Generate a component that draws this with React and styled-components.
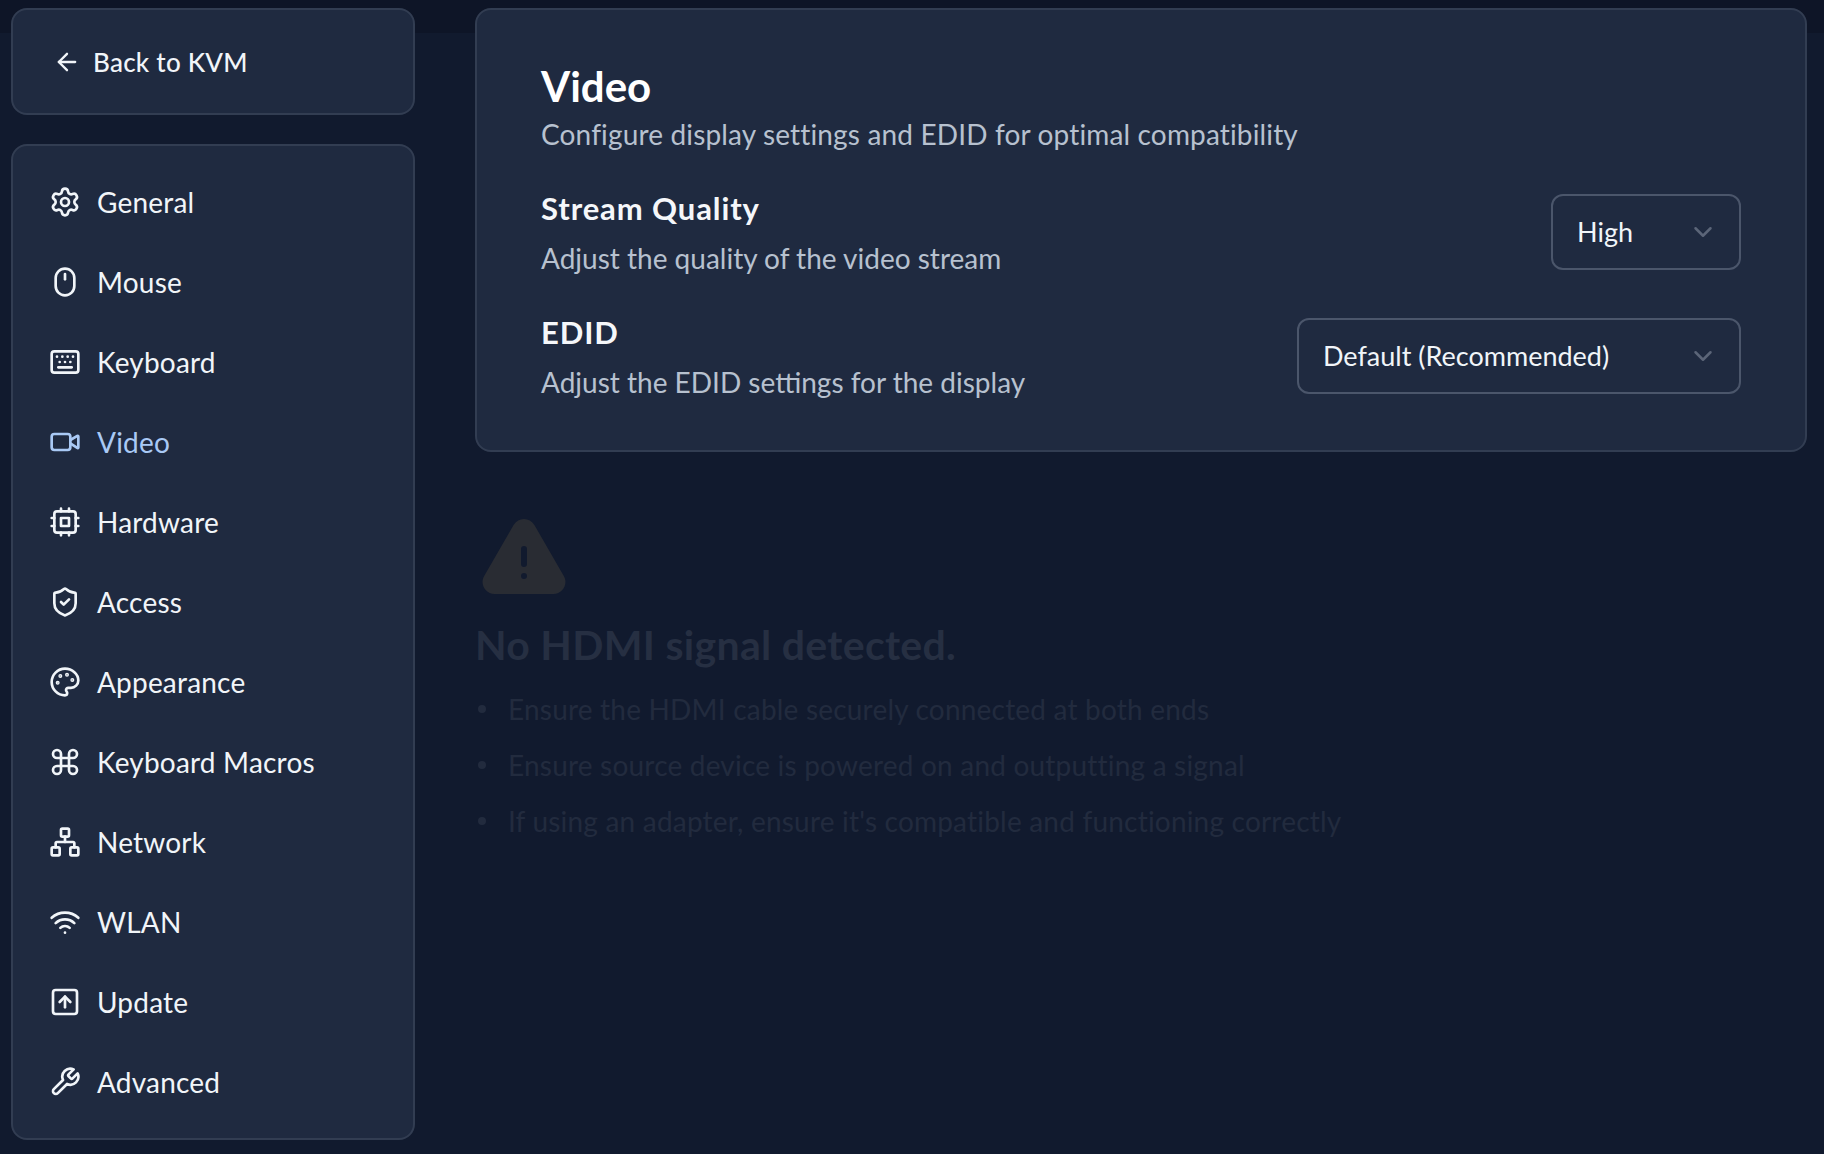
import React from 'react';
import styled, {createGlobalStyle} from 'styled-components';
import {
	ArrowLeft, ChevronDown, Settings, Mouse, Keyboard, Video, ShieldCheck,
	Command, Network, Wifi, SquareArrowUp
} from 'lucide-react';

const EstilosGlobales = createGlobalStyle`
	* {
		box-sizing: border-box;
	}

	html, body {
		margin: 0;
		padding: 0;
		background: #111a2e;
	}

	body {
		font-family: "Lato", "Noto Sans", sans-serif;
		color: #fff;
	}
`;

const IconoBase = ({size, children}) => (
	<svg width={size} height={size} viewBox="0 0 24 24" fill="none" stroke="currentColor" strokeWidth="2" strokeLinecap="round" strokeLinejoin="round">
		{children}
	</svg>
);

const Cpu = ({size}) => (
	<IconoBase size={size}>
		<rect x="4" y="4" width="16" height="16" rx="2" />
		<rect x="9" y="9" width="6" height="6" />
		<path d="M15 2v2M15 20v2M2 15h2M2 9h2M20 15h2M20 9h2M9 2v2M9 20v2" />
	</IconoBase>
);

const Palette = ({size}) => (
	<IconoBase size={size}>
		<circle cx="13.5" cy="6.5" r=".5" fill="currentColor" />
		<circle cx="17.5" cy="10.5" r=".5" fill="currentColor" />
		<circle cx="8.5" cy="7.5" r=".5" fill="currentColor" />
		<circle cx="6.5" cy="12.5" r=".5" fill="currentColor" />
		<path d="M12 2C6.5 2 2 6.5 2 12s4.5 10 10 10c.926 0 1.648-.746 1.648-1.688 0-.437-.18-.835-.437-1.125-.29-.289-.438-.652-.438-1.125a1.64 1.64 0 0 1 1.668-1.668h1.996c3.051 0 5.555-2.503 5.555-5.554C21.965 6.012 17.461 2 12 2z" />
	</IconoBase>
);

const Wrench = ({size}) => (
	<IconoBase size={size}>
		<path d="M14.7 6.3a1 1 0 0 0 0 1.4l1.6 1.6a1 1 0 0 0 1.4 0l3.77-3.77a6 6 0 0 1-7.94 7.94l-6.91 6.91a2.12 2.12 0 0 1-3-3l6.91-6.91a6 6 0 0 1 7.94-7.94l-3.76 3.76z" />
	</IconoBase>
);

const secciones = [
	{nombre: 'General', Icono: Settings},
	{nombre: 'Mouse', Icono: Mouse},
	{nombre: 'Keyboard', Icono: Keyboard},
	{nombre: 'Video', Icono: Video, activo: true},
	{nombre: 'Hardware', Icono: Cpu},
	{nombre: 'Access', Icono: ShieldCheck},
	{nombre: 'Appearance', Icono: Palette},
	{nombre: 'Keyboard Macros', Icono: Command},
	{nombre: 'Network', Icono: Network},
	{nombre: 'WLAN', Icono: Wifi},
	{nombre: 'Update', Icono: SquareArrowUp},
	{nombre: 'Advanced', Icono: Wrench},
];

const avisos = [
	'Ensure the HDMI cable securely connected at both ends',
	'Ensure source device is powered on and outputting a signal',
	"If using an adapter, ensure it's compatible and functioning correctly",
];

const App = () => {
	return (
		<Pagina>
			<EstilosGlobales />
			<BarraLateral>
				<TarjetaVolver>
					<ArrowLeft size={28} />
					<span>Back to KVM</span>
				</TarjetaVolver>
				<TarjetaNav>
					{secciones.map(({nombre, Icono, activo}) => (
						<ItemNav key={nombre} $activo={activo}>
							<Icono size={32} />
							<span>{nombre}</span>
						</ItemNav>
					))}
				</TarjetaNav>
			</BarraLateral>

			<Contenido>
				<TarjetaAjustes>
					<Titulo>Video</Titulo>
					<Descripcion>Configure display settings and EDID for optimal compatibility</Descripcion>

					<Fila>
						<TextoAjuste>
							<NombreAjuste>Stream Quality</NombreAjuste>
							<DetalleAjuste>Adjust the quality of the video stream</DetalleAjuste>
						</TextoAjuste>
						<Selector $ancho={190}>
							<span>High</span>
							<ChevronDown size={30} />
						</Selector>
					</Fila>

					<Fila>
						<TextoAjuste>
							<NombreAjuste>EDID</NombreAjuste>
							<DetalleAjuste>Adjust the EDID settings for the display</DetalleAjuste>
						</TextoAjuste>
						<Selector $ancho={444}>
							<span>Default (Recommended)</span>
							<ChevronDown size={30} />
						</Selector>
					</Fila>
				</TarjetaAjustes>

				<SinSenal>
					<IconoAviso viewBox="0 0 24 24">
						<path
							fillRule="evenodd"
							clipRule="evenodd"
							d="M9.401 3.003c1.155-2 4.043-2 5.197 0l7.355 12.748c1.154 2-.29 4.5-2.599 4.5H4.645c-2.309 0-3.752-2.5-2.598-4.5L9.4 3.003zM12 8.25a.75.75 0 01.75.75v3.75a.75.75 0 01-1.5 0V9A.75.75 0 0112 8.25zm0 8.25a.75.75 0 100-1.5.75.75 0 000 1.5z"
						/>
					</IconoAviso>
					<TituloAviso>No HDMI signal detected.</TituloAviso>
					<ListaAvisos>
						{avisos.map((aviso) => <li key={aviso}>{aviso}</li>)}
					</ListaAvisos>
				</SinSenal>
			</Contenido>
		</Pagina>
	);
}

const Pagina = styled.div`
	display: flex;
	gap: 60px;
	height: 1154px;
	padding: 8px 17px 0 11px;
	overflow: hidden;
	background: linear-gradient(#0e1527 0 33px, #111a2e 33px);
`;

const BarraLateral = styled.aside`
	display: flex;
	flex-direction: column;
	gap: 29px;
	width: 404px;
	flex-shrink: 0;
`;

const Tarjeta = styled.div`
	background: #1f2a40;
	border: 2px solid #323d52;
	border-radius: 16px;
`;

const TarjetaVolver = styled(Tarjeta)`
	display: flex;
	align-items: center;
	gap: 12px;
	height: 107px;
	padding-left: 40px;
	font-size: 26px;
	font-weight: 500;
	letter-spacing: .25px;
	color: #f1f5f9;
`;

const TarjetaNav = styled(Tarjeta)`
	display: flex;
	flex-direction: column;
	height: 996px;
	padding: 16px 36px 0;
`;

const ItemNav = styled.div`
	display: flex;
	align-items: center;
	gap: 16px;
	height: 80px;
	font-size: 28px;
	letter-spacing: .2px;
	color: ${({$activo}) => $activo ? '#a9c9f5' : '#f1f5f9'};
`;

const Contenido = styled.main`
	flex: 1;
	display: flex;
	flex-direction: column;
`;

const TarjetaAjustes = styled(Tarjeta)`
	display: flex;
	flex-direction: column;
	height: 444px;
	padding: 52px 64px 0;
`;

const Titulo = styled.h1`
	margin: 0;
	font-size: 42px;
	line-height: 48px;
	font-weight: 700;
`;

const Descripcion = styled.p`
	margin: 0 0 12px;
	font-size: 28px;
	line-height: 48px;
	letter-spacing: .15px;
	color: #b7c1cf;
`;

const Fila = styled.div`
	display: flex;
	justify-content: space-between;
	align-items: center;
	height: 124px;
`;

const TextoAjuste = styled.div`
	align-self: flex-start;
	padding-top: 16px;
`;

const NombreAjuste = styled.div`
	font-size: 31px;
	line-height: 44px;
	font-weight: 700;
	letter-spacing: .9px;
	color: #f5f7fa;
`;

const DetalleAjuste = styled.div`
	font-size: 28px;
	line-height: 56px;
	color: #b7c1cf;
`;

const Selector = styled.div`
	display: flex;
	align-items: center;
	justify-content: space-between;
	width: ${({$ancho}) => $ancho}px;
	height: 76px;
	padding: 0 21px 0 24px;
	border: 2px solid #4b566b;
	border-radius: 12px;
	font-size: 27px;
	line-height: 70px;
	color: #f1f5f9;

	svg {
		color: #5b6578;
	}
`;

const SinSenal = styled.section`
	display: flex;
	flex-direction: column;
	margin-top: 61px;
`;

const IconoAviso = styled.svg`
	width: 96px;
	height: 96px;
	margin-left: 1px;
	fill: #292c33;
`;

const TituloAviso = styled.h2`
	margin: 12px 0 12px;
	font-size: 41px;
	line-height: 48px;
	font-weight: 700;
	letter-spacing: .3px;
	color: #262f42;
`;

const ListaAvisos = styled.ul`
	margin: 0;
	padding: 0;
	list-style: none;
	font-size: 28px;
	line-height: 56px;
	letter-spacing: .2px;
	color: #222b3e;

	li {
		display: flex;
		align-items: center;
	}

	li::before {
		content: '';
		width: 8px;
		height: 8px;
		margin: 0 22px 0 3px;
		border-radius: 50%;
		background: #222b3e;
	}
`;

export default App;
